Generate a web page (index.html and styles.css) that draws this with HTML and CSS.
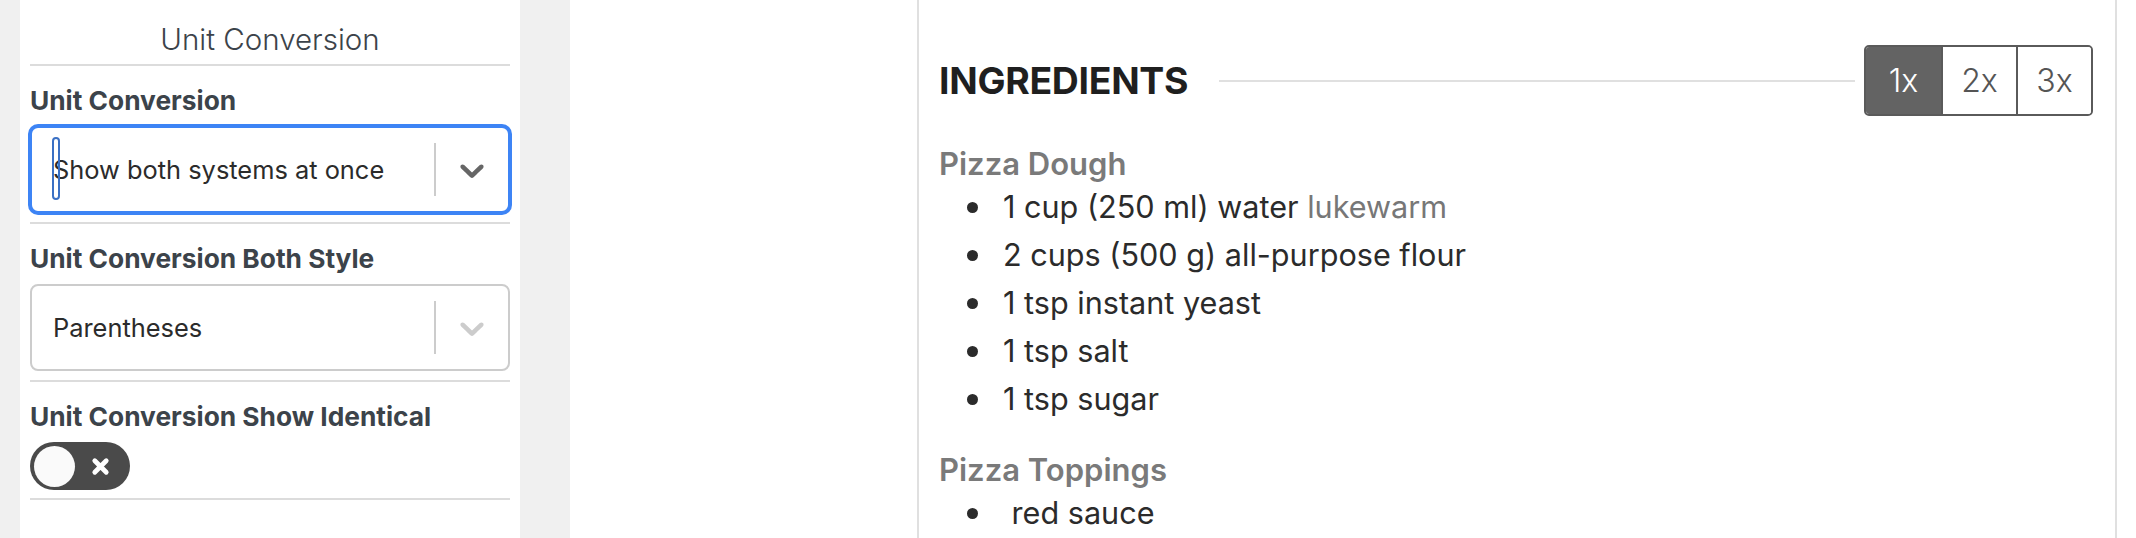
FILE: index.html
```html
<!DOCTYPE html>
<html lang="en">
<head>
<meta charset="utf-8">
<title>Unit Conversion</title>
<link rel="stylesheet" href="styles.css">
</head>
<body>
<div class="page">
  <aside class="sidebar">
    <div class="panel-title">Unit Conversion</div>
    <div class="field">
      <div class="field-label">Unit Conversion</div>
      <div class="select is-focused">
        <div class="select-value"><span class="caret"></span>Show both systems at once</div>
        <span class="select-sep"></span>
        <span class="select-arrow">
          <svg viewBox="0 0 20 20" width="40" height="40"><path d="M4.516 7.548c0.436-0.446 1.043-0.481 1.576 0l3.908 3.747 3.908-3.747c0.533-0.481 1.141-0.446 1.574 0 0.436 0.445 0.408 1.197 0 1.615-0.406 0.418-4.695 4.502-4.695 4.502-0.217 0.223-0.502 0.335-0.787 0.335s-0.57-0.112-0.789-0.335c0 0-4.287-4.084-4.695-4.502s-0.436-1.17 0-1.615z"/></svg>
        </span>
      </div>
    </div>
    <div class="field">
      <div class="field-label">Unit Conversion Both Style</div>
      <div class="select">
        <div class="select-value">Parentheses</div>
        <span class="select-sep"></span>
        <span class="select-arrow">
          <svg viewBox="0 0 20 20" width="40" height="40"><path d="M4.516 7.548c0.436-0.446 1.043-0.481 1.576 0l3.908 3.747 3.908-3.747c0.533-0.481 1.141-0.446 1.574 0 0.436 0.445 0.408 1.197 0 1.615-0.406 0.418-4.695 4.502-4.695 4.502-0.217 0.223-0.502 0.335-0.787 0.335s-0.57-0.112-0.789-0.335c0 0-4.287-4.084-4.695-4.502s-0.436-1.170 0-1.615z"/></svg>
        </span>
      </div>
    </div>
    <div class="field field-toggle">
      <div class="field-label">Unit Conversion Show Identical</div>
      <div class="toggle">
        <span class="toggle-knob"></span>
        <svg class="toggle-x" viewBox="0 0 22 22" width="21" height="21"><path d="M5 5 L17 17 M17 5 L5 17"/></svg>
      </div>
    </div>
  </aside>
  <div class="gutter"></div>
  <main class="main">
    <section class="card">
      <div class="ing-header">
        <h2 class="ing-title">INGREDIENTS</h2>
        <div class="ing-rule"></div>
        <div class="servings">
          <span class="serv active">1x</span>
          <span class="serv">2x</span>
          <span class="serv">3x</span>
        </div>
      </div>
      <div class="group">
        <div class="group-name">Pizza Dough</div>
        <ul class="ing-list">
          <li><span>1 cup (250 ml) water <span class="notes">lukewarm</span></span></li>
          <li><span>2 cups (500 g) all-purpose flour</span></li>
          <li><span>1 tsp instant yeast</span></li>
          <li><span>1 tsp salt</span></li>
          <li><span>1 tsp sugar</span></li>
        </ul>
      </div>
      <div class="group">
        <div class="group-name">Pizza Toppings</div>
        <ul class="ing-list">
          <li><span>&nbsp;red sauce</span></li>
        </ul>
      </div>
    </section>
  </main>
</div>
</body>
</html>
```

FILE: styles.css
```css
* { box-sizing: border-box; }
html, body { margin: 0; padding: 0; }
body {
  font-family: Inter, "Noto Sans", "Liberation Sans", sans-serif;
  background: #f0f0f0;
  overflow: hidden;
}
.page {
  display: flex;
  height: 538px;
  padding-left: 20px;
}
.sidebar {
  width: 500px;
  flex: none;
  background: #fff;
  padding: 0 10px;
}
.gutter { width: 50px; flex: none; }
.main {
  flex: 1;
  background: #fff;
  padding: 0 19px 0 347px;
  display: flex;
}
.panel-title {
  font-size: 29.5px;
  font-weight: 300;
  color: #3c434a;
  text-align: center;
  line-height: 40px;
  padding: 19px 0 5px;
  border-bottom: 2px solid #dcdcdc;
}
.field {
  padding: 20px 0 9px;
  border-bottom: 2px solid #dcdcdc;
}
.field-toggle { padding-bottom: 8px; }
.field-label {
  font-size: 26.3px;
  font-weight: 700;
  color: #3c434a;
  line-height: 30px;
  margin-bottom: 10px;
}
.select {
  height: 87px;
  border: 2px solid #cccccc;
  border-radius: 8px;
  display: flex;
  align-items: center;
  background: #fff;
}
.select.is-focused {
  border-color: #3d84f5;
  box-shadow: 0 0 0 2px #3d84f5;
}
.select-value {
  position: relative;
  flex: 1;
  padding-left: 21px;
  font-size: 25.4px;
  color: #2b2b2b;
  white-space: nowrap;
}
.caret {
  position: absolute;
  left: 20px;
  top: -17px;
  width: 8px;
  height: 63px;
  border: 2px solid #3a70c4;
  border-radius: 4px;
}
.select-sep {
  width: 2px;
  height: 53px;
  background: #cccccc;
  flex: none;
}
.select-arrow {
  width: 72px;
  flex: none;
  display: flex;
  align-items: center;
  justify-content: center;
  fill: #cccccc;
}
.is-focused .select-arrow { fill: #666666; }
.select-arrow svg { display: block; }
.toggle {
  width: 100px;
  height: 48px;
  border-radius: 24px;
  background: #4a4a4a;
  display: flex;
  align-items: center;
  padding: 0 4px;
}
.toggle-knob {
  width: 41px;
  height: 41px;
  border-radius: 50%;
  background: #fafafa;
  flex: none;
}
.toggle-x {
  margin-left: 15px;
  stroke: #fff;
  stroke-width: 5;
  stroke-linecap: round;
  fill: none;
}
.card {
  flex: 1;
  border-left: 2px solid #e0e0e0;
  border-right: 2px solid #e0e0e0;
  padding: 45px 22px 0 20px;
}
.ing-header {
  display: flex;
  align-items: center;
}
.ing-title {
  margin: 0;
  font-size: 37.4px;
  font-weight: 700;
  color: #1f1f1f;
  letter-spacing: -0.3px;
  line-height: 44px;
}
.ing-rule {
  flex: 1;
  height: 2px;
  background: #e0e0e0;
  margin: 0 9px 0 31px;
}
.servings {
  display: flex;
  border: 2px solid #5a5a5a;
  border-radius: 5px;
  overflow: hidden;
  height: 71px;
}
.serv {
  width: 75px;
  display: flex;
  align-items: center;
  justify-content: center;
  font-size: 32px;
  font-weight: 350;
  color: #555;
  background: #fff;
}
.serv + .serv { border-left: 2px solid #5a5a5a; }
.serv.active { background: #636363; color: #fff; }
.group { margin-top: 28px; }
.group + .group { margin-top: 27px; }
.group-name {
  font-size: 31px;
  font-weight: 600;
  color: #7a7a7a;
  line-height: 39px;
}
.ing-list {
  list-style: none;
  margin: 0;
  padding: 0 0 0 28px;
}
.ing-list li {
  display: flex;
  align-items: center;
  font-size: 30.6px;
  line-height: 48px;
  color: #2b2b2b;
}
.ing-list li::before {
  content: "";
  width: 11px;
  height: 11px;
  border-radius: 50%;
  background: #2b2b2b;
  margin-right: 25px;
  flex: none;
}
.notes { color: #777; }
```
